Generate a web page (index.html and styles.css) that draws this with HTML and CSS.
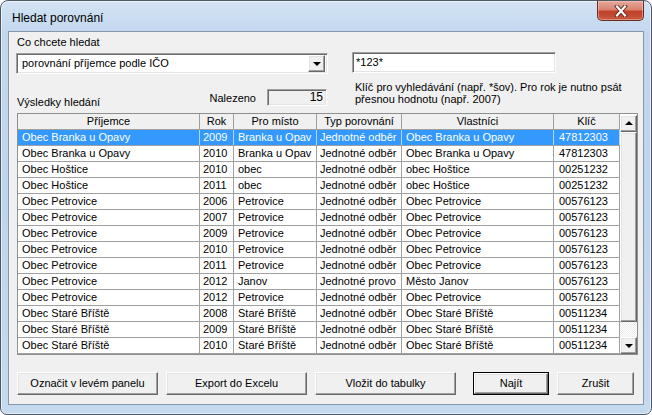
FILE: index.html
```
<!DOCTYPE html>
<html>
<head>
<meta charset="utf-8">
<link rel="stylesheet" href="styles.css">
</head>
<body>
<div class="window">
  <div class="titlebar">
    <span class="title">Hledat porovnání</span>
    <div class="close">
      <svg width="14" height="12" viewBox="0 0 14 12">
        <path d="M3 1.5 L11 10.5 M11 1.5 L3 10.5" stroke="#5a2218" stroke-width="4" fill="none" stroke-linecap="square"/>
        <path d="M3 1.5 L11 10.5 M11 1.5 L3 10.5" stroke="#ffffff" stroke-width="2.2" fill="none" stroke-linecap="square"/>
      </svg>
    </div>
  </div>
  <div class="client">
    <div class="top">
      <div class="lbl">Co chcete hledat</div>
      <div class="empty"></div>
      <div class="combo sunken">
        <span class="combo-text">porovnání příjemce podle IČO</span>
        <span class="drop raised"><span class="tri-down"></span></span>
      </div>
      <div class="input sunken">*123*</div>
      <div class="found">
        <span class="results">Výsledky hledání</span>
        <div class="count-group">
          <span>Nalezeno</span>
          <div class="count sunken">15</div>
        </div>
      </div>
      <div class="hint">Klíč pro vyhledávání (např. *šov). Pro rok je nutno psát<br>přesnou hodnotu (např. 2007)</div>
    </div>

    <div class="grid">
      <div class="rows">
        <div class="row head">
          <div class="c c1">Příjemce</div><div class="c c2">Rok</div><div class="c c3">Pro místo</div><div class="c c4">Typ porovnání</div><div class="c c5">Vlastníci</div><div class="c c6">Klíč</div>
        </div>
        <div class="row sel">
          <div class="c c1">Obec Branka u Opavy</div><div class="c c2">2009</div><div class="c c3">Branka u Opav</div><div class="c c4">Jednotné odběr</div><div class="c c5">Obec Branka u Opavy</div><div class="c c6">47812303</div>
        </div>
        <div class="row">
          <div class="c c1">Obec Branka u Opavy</div><div class="c c2">2010</div><div class="c c3">Branka u Opav</div><div class="c c4">Jednotné odběr</div><div class="c c5">Obec Branka u Opavy</div><div class="c c6">47812303</div>
        </div>
        <div class="row">
          <div class="c c1">Obec Hoštice</div><div class="c c2">2010</div><div class="c c3">obec</div><div class="c c4">Jednotné odběr</div><div class="c c5">obec Hoštice</div><div class="c c6">00251232</div>
        </div>
        <div class="row">
          <div class="c c1">Obec Hoštice</div><div class="c c2">2011</div><div class="c c3">obec</div><div class="c c4">Jednotné odběr</div><div class="c c5">obec Hoštice</div><div class="c c6">00251232</div>
        </div>
        <div class="row">
          <div class="c c1">Obec Petrovice</div><div class="c c2">2006</div><div class="c c3">Petrovice</div><div class="c c4">Jednotné odběr</div><div class="c c5">Obec Petrovice</div><div class="c c6">00576123</div>
        </div>
        <div class="row">
          <div class="c c1">Obec Petrovice</div><div class="c c2">2007</div><div class="c c3">Petrovice</div><div class="c c4">Jednotné odběr</div><div class="c c5">Obec Petrovice</div><div class="c c6">00576123</div>
        </div>
        <div class="row">
          <div class="c c1">Obec Petrovice</div><div class="c c2">2009</div><div class="c c3">Petrovice</div><div class="c c4">Jednotné odběr</div><div class="c c5">Obec Petrovice</div><div class="c c6">00576123</div>
        </div>
        <div class="row">
          <div class="c c1">Obec Petrovice</div><div class="c c2">2010</div><div class="c c3">Petrovice</div><div class="c c4">Jednotné odběr</div><div class="c c5">Obec Petrovice</div><div class="c c6">00576123</div>
        </div>
        <div class="row">
          <div class="c c1">Obec Petrovice</div><div class="c c2">2011</div><div class="c c3">Petrovice</div><div class="c c4">Jednotné odběr</div><div class="c c5">Obec Petrovice</div><div class="c c6">00576123</div>
        </div>
        <div class="row">
          <div class="c c1">Obec Petrovice</div><div class="c c2">2012</div><div class="c c3">Janov</div><div class="c c4">Jednotné provo</div><div class="c c5">Město Janov</div><div class="c c6">00576123</div>
        </div>
        <div class="row">
          <div class="c c1">Obec Petrovice</div><div class="c c2">2012</div><div class="c c3">Petrovice</div><div class="c c4">Jednotné odběr</div><div class="c c5">Obec Petrovice</div><div class="c c6">00576123</div>
        </div>
        <div class="row">
          <div class="c c1">Obec Staré Bříště</div><div class="c c2">2008</div><div class="c c3">Staré Bříště</div><div class="c c4">Jednotné odběr</div><div class="c c5">Obec Staré Bříště</div><div class="c c6">00511234</div>
        </div>
        <div class="row">
          <div class="c c1">Obec Staré Bříště</div><div class="c c2">2009</div><div class="c c3">Staré Bříště</div><div class="c c4">Jednotné odběr</div><div class="c c5">Obec Staré Bříště</div><div class="c c6">00511234</div>
        </div>
        <div class="row">
          <div class="c c1">Obec Staré Bříště</div><div class="c c2">2010</div><div class="c c3">Staré Bříště</div><div class="c c4">Jednotné odběr</div><div class="c c5">Obec Staré Bříště</div><div class="c c6">00511234</div>
        </div>
      </div>
      <div class="scroll">
        <div class="sbtn raised"><span class="tri-up"></span></div>
        <div class="thumb raised"></div>
        <div class="track"></div>
        <div class="sbtn raised"><span class="tri-down"></span></div>
      </div>
    </div>

    <div class="buttons">
      <div class="btn raised w1">Označit v levém panelu</div>
      <div class="btn raised w1">Export do Excelu</div>
      <div class="btn raised w1">Vložit do tabulky</div>
      <div class="btn def"><div class="btn raised inner">Najít</div></div>
      <div class="btn raised w3">Zrušit</div>
    </div>
  </div>
</div>
</body>
</html>
```

FILE: styles.css
```
html, body {
  margin: 0;
  padding: 0;
  background: #ffffff;
}

body {
  font-family: "Liberation Sans", Arial, sans-serif;
  font-size: 11px;
  color: #000;
}

.window {
  width: 652px;
  height: 415px;
  box-sizing: border-box;
  border: 1px solid #4e5965;
  border-radius: 8px 8px 7px 7px;
  background: linear-gradient(#d3e3f4 0px, #c3d8ef 30px, #bfd5ed 200px, #c6daef 415px);
  box-shadow: inset 0 0 0 1px rgba(255, 255, 255, 0.55);
  padding: 0 7px 9px 7px;
  display: flex;
  flex-direction: column;
}

.titlebar {
  height: 30px;
  display: flex;
  align-items: flex-start;
  justify-content: space-between;
}

.title {
  font-size: 12px;
  line-height: 14px;
  margin-top: 10px;
  margin-left: 4px;
  color: #000;
}

.close {
  width: 47px;
  height: 20px;
  box-sizing: border-box;
  border: 1px solid #6a2e25;
  border-top: none;
  border-radius: 0 0 5px 5px;
  background: linear-gradient(#e6a99b 0%, #d98370 45%, #c0402a 55%, #c75b3f 100%);
  box-shadow: inset 0 0 0 1px rgba(255, 210, 200, 0.45);
  display: flex;
  align-items: center;
  justify-content: center;
}

.client {
  flex: 1;
  border: 1px solid #8897a8;
  background: #f0f0f0;
  padding: 0 5px 0 8px;
  display: flex;
  flex-direction: column;
}

.raised {
  background: #f0f0f0;
  border: 1px solid;
  border-color: #ffffff #696969 #696969 #ffffff;
  box-shadow: inset -1px -1px 0 #a0a0a0, inset 1px 1px 0 #e3e3e3;
  box-sizing: border-box;
}

.sunken {
  border: 1px solid;
  border-color: #a0a0a0 #ffffff #ffffff #a0a0a0;
  box-shadow: inset 1px 1px 0 #696969, inset -1px -1px 0 #e3e3e3;
  box-sizing: border-box;
}

.top {
  display: grid;
  grid-template-columns: 312px 204px;
  grid-template-rows: 21px 21px 39px;
  column-gap: 24px;
  margin-left: -1px;
}

.lbl {
  padding-top: 4px;
  padding-left: 1px;
  line-height: 13px;
}

.combo {
  background: #fff;
  display: flex;
  align-items: center;
  justify-content: space-between;
  padding: 2px;
}

.combo-text {
  padding-left: 3px;
  line-height: 13px;
}

.drop {
  width: 17px;
  height: 17px;
  display: flex;
  align-items: center;
  justify-content: center;
}

.tri-down {
  width: 0;
  height: 0;
  border-left: 4px solid transparent;
  border-right: 4px solid transparent;
  border-top: 4px solid #000;
  margin-top: 1px;
}

.tri-up {
  width: 0;
  height: 0;
  border-left: 4px solid transparent;
  border-right: 4px solid transparent;
  border-bottom: 4px solid #000;
  margin-bottom: 1px;
}

.input {
  background: #fff;
  padding: 0 3px;
  line-height: 19px;
  margin-top: -1px;
  height: 21px;
}

.found {
  display: flex;
  justify-content: space-between;
  align-items: flex-start;
  padding-left: 1px;
}

.results {
  align-self: flex-end;
  line-height: 13px;
  margin-bottom: 4px;
}

.count-group {
  display: flex;
  align-items: center;
  gap: 11px;
  margin-top: 15px;
  margin-right: 1px;
}

.count {
  width: 60px;
  height: 17px;
  background: #f0f0f0;
  text-align: right;
  padding-right: 3px;
  line-height: 15px;
  font-size: 12px;
}

.hint {
  padding-top: 7px;
  padding-left: 3px;
  line-height: 12px;
  white-space: nowrap;
}

.grid {
  width: 621px;
  border: 1px solid #8e8f8f;
  background: #fff;
  display: flex;
  box-sizing: border-box;
}

.rows {
  width: 602px;
}

.row {
  display: flex;
  height: 16px;
  box-sizing: border-box;
  border-bottom: 1px solid #a0a0a0;
}

.c {
  box-sizing: border-box;
  border-right: 1px solid #a0a0a0;
  line-height: 15px;
  white-space: nowrap;
  overflow: hidden;
  padding-left: 4px;
}

.c1 { width: 182px; }
.c2 { width: 34px; padding-left: 3px; }
.c3 { width: 83px; }
.c4 { width: 85px; padding-left: 3px; }
.c5 { width: 152px; }
.c6 { width: 66px; padding-left: 5px; }

.head {
  background: #f0f0f0;
}

.head .c {
  text-align: center;
  padding-left: 0;
}

.sel {
  background: #3399ff;
  color: #fff;
}

.sel .c {
  border-right-color: #b5d6f7;
}

.scroll {
  width: 17px;
  display: flex;
  flex-direction: column;
  background: #f6f6f6;
  margin-top: 1px;
}

.sbtn {
  height: 17px;
  display: flex;
  align-items: center;
  justify-content: center;
}

.thumb {
  height: 190px;
}

.track {
  flex: 1;
  background-image: repeating-conic-gradient(#ffffff 0 25%, #ececec 0 50%);
  background-size: 2px 2px;
}

.buttons {
  display: flex;
  margin-top: 17px;
  height: 23px;
}

.btn {
  height: 23px;
  display: flex;
  align-items: center;
  justify-content: center;
  line-height: 13px;
  box-sizing: border-box;
}

.w1 {
  width: 141px;
  margin-right: 8px;
}

.w1:nth-child(3) {
  margin-right: 17px;
}

.def {
  width: 76px;
  border: 1px solid #000;
  margin-right: 8px;
}

.def .inner {
  width: 100%;
  height: 100%;
}

.w3 {
  width: 77px;
}
```
